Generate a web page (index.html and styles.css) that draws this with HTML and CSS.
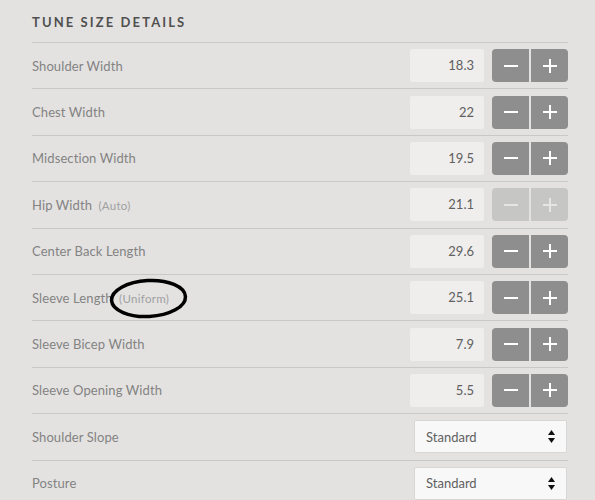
FILE: index.html
```html
<!DOCTYPE html>
<html>
<head>
<meta charset="utf-8">
<link rel="stylesheet" href="styles.css">
</head>
<body>
<div class="panel">
  <h2 class="title">TUNE SIZE DETAILS</h2>
  <div class="row">
    <span class="label">Shoulder Width</span>
    <div class="ctrl"><div class="num">18.3</div><div class="btns"><button class="btn minus"><svg width="14" height="14" viewBox="0 0 14 14"><rect x="0" y="6" width="14" height="2" fill="#fff"/></svg></button><button class="btn plus"><svg width="14" height="14" viewBox="0 0 14 14"><rect x="0" y="6" width="14" height="2" fill="#fff"/><rect x="6" y="0" width="2" height="14" fill="#fff"/></svg></button></div></div>
  </div>
  <div class="row">
    <span class="label">Chest Width</span>
    <div class="ctrl"><div class="num">22</div><div class="btns"><button class="btn minus"><svg width="14" height="14" viewBox="0 0 14 14"><rect x="0" y="6" width="14" height="2" fill="#fff"/></svg></button><button class="btn plus"><svg width="14" height="14" viewBox="0 0 14 14"><rect x="0" y="6" width="14" height="2" fill="#fff"/><rect x="6" y="0" width="2" height="14" fill="#fff"/></svg></button></div></div>
  </div>
  <div class="row">
    <span class="label">Midsection Width</span>
    <div class="ctrl"><div class="num">19.5</div><div class="btns"><button class="btn minus"><svg width="14" height="14" viewBox="0 0 14 14"><rect x="0" y="6" width="14" height="2" fill="#fff"/></svg></button><button class="btn plus"><svg width="14" height="14" viewBox="0 0 14 14"><rect x="0" y="6" width="14" height="2" fill="#fff"/><rect x="6" y="0" width="2" height="14" fill="#fff"/></svg></button></div></div>
  </div>
  <div class="row">
    <span class="label">Hip Width <span class="note">(Auto)</span></span>
    <div class="ctrl"><div class="num">21.1</div><div class="btns disabled"><button class="btn minus"><svg width="14" height="14" viewBox="0 0 14 14"><rect x="0" y="6" width="14" height="2" fill="#fff"/></svg></button><button class="btn plus"><svg width="14" height="14" viewBox="0 0 14 14"><rect x="0" y="6" width="14" height="2" fill="#fff"/><rect x="6" y="0" width="2" height="14" fill="#fff"/></svg></button></div></div>
  </div>
  <div class="row">
    <span class="label">Center Back Length</span>
    <div class="ctrl"><div class="num">29.6</div><div class="btns"><button class="btn minus"><svg width="14" height="14" viewBox="0 0 14 14"><rect x="0" y="6" width="14" height="2" fill="#fff"/></svg></button><button class="btn plus"><svg width="14" height="14" viewBox="0 0 14 14"><rect x="0" y="6" width="14" height="2" fill="#fff"/><rect x="6" y="0" width="2" height="14" fill="#fff"/></svg></button></div></div>
  </div>
  <div class="row">
    <span class="label">Sleeve Length <span class="note">(Uniform)</span></span>
    <div class="ctrl"><div class="num">25.1</div><div class="btns"><button class="btn minus"><svg width="14" height="14" viewBox="0 0 14 14"><rect x="0" y="6" width="14" height="2" fill="#fff"/></svg></button><button class="btn plus"><svg width="14" height="14" viewBox="0 0 14 14"><rect x="0" y="6" width="14" height="2" fill="#fff"/><rect x="6" y="0" width="2" height="14" fill="#fff"/></svg></button></div></div>
  </div>
  <div class="row">
    <span class="label">Sleeve Bicep Width</span>
    <div class="ctrl"><div class="num">7.9</div><div class="btns"><button class="btn minus"><svg width="14" height="14" viewBox="0 0 14 14"><rect x="0" y="6" width="14" height="2" fill="#fff"/></svg></button><button class="btn plus"><svg width="14" height="14" viewBox="0 0 14 14"><rect x="0" y="6" width="14" height="2" fill="#fff"/><rect x="6" y="0" width="2" height="14" fill="#fff"/></svg></button></div></div>
  </div>
  <div class="row">
    <span class="label">Sleeve Opening Width</span>
    <div class="ctrl"><div class="num">5.5</div><div class="btns"><button class="btn minus"><svg width="14" height="14" viewBox="0 0 14 14"><rect x="0" y="6" width="14" height="2" fill="#fff"/></svg></button><button class="btn plus"><svg width="14" height="14" viewBox="0 0 14 14"><rect x="0" y="6" width="14" height="2" fill="#fff"/><rect x="6" y="0" width="2" height="14" fill="#fff"/></svg></button></div></div>
  </div>
  <div class="row">
    <span class="label">Shoulder Slope</span>
    <div class="select"><span>Standard</span><svg width="7" height="13" viewBox="0 0 7 13"><polygon points="3.5,0 7,5 0,5" fill="#111"/><polygon points="0,8 7,8 3.5,13" fill="#111"/></svg></div>
  </div>
  <div class="row">
    <span class="label">Posture</span>
    <div class="select"><span>Standard</span><svg width="7" height="13" viewBox="0 0 7 13"><polygon points="3.5,0 7,5 0,5" fill="#111"/><polygon points="0,8 7,8 3.5,13" fill="#111"/></svg></div>
  </div>
</div>
<svg class="annot" width="90" height="46" viewBox="0 0 90 46"><ellipse cx="44.5" cy="22.5" rx="37" ry="18" transform="rotate(-3 44.5 22.5)" fill="none" stroke="#000" stroke-width="3.5"/></svg>
</body>
</html>
```
FILE: styles.css
```css
html, body {
  margin: 0;
  padding: 0;
  background: #e3e2e1;
}
body {
  font-family: Lato, "Noto Sans", sans-serif;
  position: relative;
  height: 500px;
  overflow: hidden;
}
.panel {
  margin-left: 32px;
  width: 536px;
}
.title {
  margin: 0;
  height: 42px;
  line-height: 44px;
  font-size: 13px;
  font-weight: 700;
  letter-spacing: 2.1px;
  color: #505050;
}
.row {
  border-top: 1px solid #c9c8c7;
  height: 45.4px;
  display: flex;
  align-items: center;
  justify-content: space-between;
}
.label {
  font-size: 13px;
  color: #838383;
  letter-spacing: 0.1px;
}
.note {
  font-size: 11.5px;
  color: #a0a0a0;
  margin-left: 3px;
  letter-spacing: 0.3px;
}
.ctrl {
  display: flex;
  align-items: center;
  gap: 8px;
}
.num {
  width: 74px;
  height: 33px;
  box-sizing: border-box;
  background: #efeeed;
  border-radius: 2px;
  text-align: right;
  padding-right: 10px;
  line-height: 33px;
  font-size: 13px;
  color: #606060;
}
.btns {
  display: flex;
  gap: 2px;
}
.btn {
  width: 37px;
  height: 33px;
  border: none;
  padding: 0;
  margin: 0;
  background: #8e8e8e;
  display: flex;
  align-items: center;
  justify-content: center;
}
.btn.minus { border-radius: 4px 0 0 4px; }
.btn.plus { border-radius: 0 4px 4px 0; }
.btns.disabled .btn { background: #c6c6c5; }
.btns.disabled .btn svg { opacity: 0.55; }
.select {
  width: 153px;
  height: 33px;
  box-sizing: border-box;
  margin-right: 1px;
  background: #f8f8f8;
  border: 1px solid #d8d7d6;
  border-radius: 2px;
  display: flex;
  align-items: center;
  justify-content: space-between;
  padding: 0 11px 0 11px;
  font-size: 13px;
  color: #606060;
}
.annot {
  position: absolute;
  left: 104px;
  top: 276px;
}
```
